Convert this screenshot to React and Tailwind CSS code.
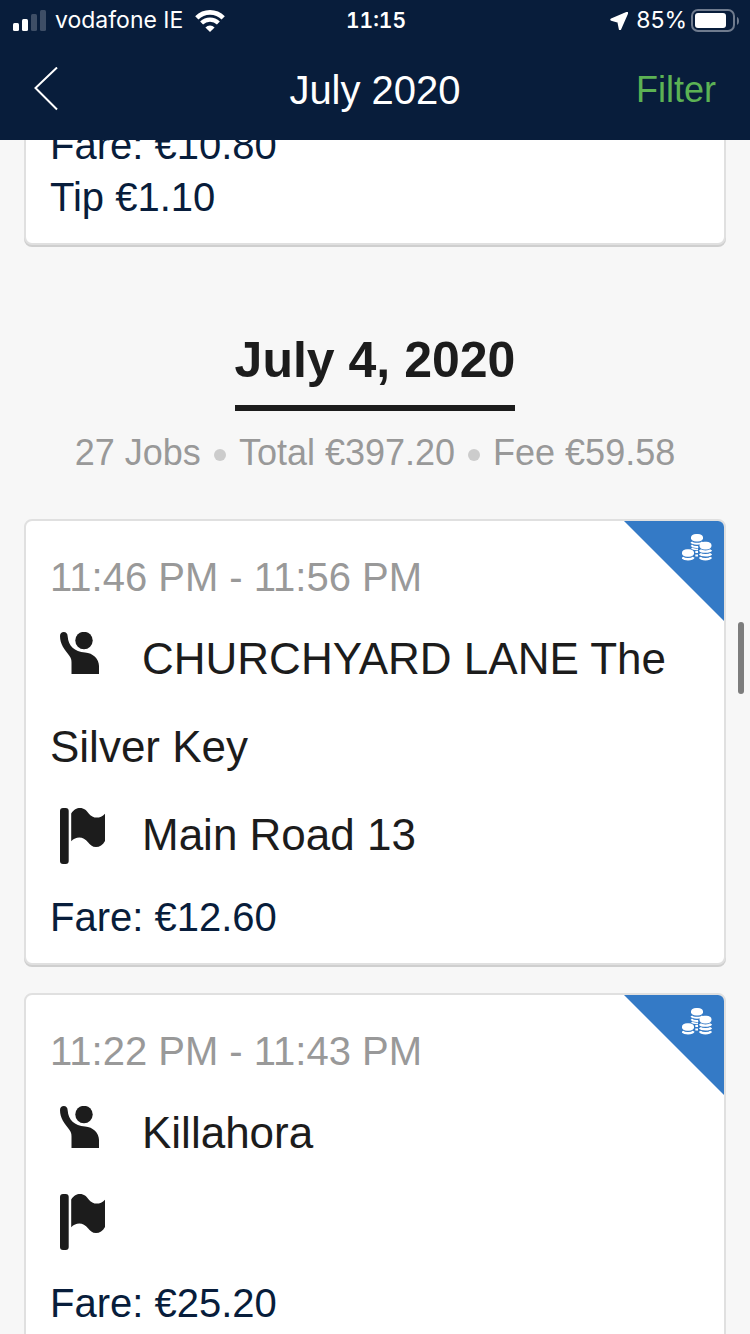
import clsx from 'clsx';

const previousTrip = { fare: '€10.80', tip: '€1.10' };

const day = {
  title: 'July 4, 2020',
  summary: ['27 Jobs', 'Total €397.20', 'Fee €59.58'],
  trips: [
    {
      time: '11:46 PM - 11:56 PM',
      pickup: 'CHURCHYARD LANE The Silver Key',
      dropoff: 'Main Road 13',
      fare: '€12.60',
    },
    {
      time: '11:22 PM - 11:43 PM',
      pickup: 'Killahora',
      dropoff: '',
      fare: '€25.20',
    },
  ],
};

function SignalIcon() {
  return (
    <svg width="34" height="22" viewBox="0 0 34 22" fill="#fff" aria-hidden="true">
      <rect x="0" y="13" width="6" height="8" rx="1.5" />
      <rect x="9" y="9" width="6" height="12" rx="1.5" />
      <rect x="18" y="4" width="6" height="17" rx="1.5" opacity="0.22" />
      <rect x="27" y="0" width="6" height="21" rx="1.5" opacity="0.22" />
    </svg>
  );
}

function WifiIcon() {
  return (
    <svg width="30" height="22" viewBox="0 0 30 22" fill="none" stroke="#fff" aria-hidden="true">
      <path d="M1.8 7.8a18.8 18.8 0 0 1 26.4 0" strokeWidth="4.6" />
      <path d="M6.6 13a12 12 0 0 1 16.8 0" strokeWidth="4.2" />
      <path d="M15 22l-4.6-4.6a6.5 6.5 0 0 1 9.200 0z" fill="#fff" stroke="none" />
    </svg>
  );
}

function LocationIcon() {
  return (
    <svg width="18" height="18" viewBox="0 0 18 18" fill="#fff" stroke="#fff" aria-hidden="true">
      <path d="M17 1 1.500 7.500 8.500 9.500 10 17z" strokeWidth="2.4" strokeLinejoin="round" />
    </svg>
  );
}

function BatteryIcon() {
  return (
    <svg width="48" height="24" viewBox="0 0 48 24" aria-hidden="true">
      <rect x="1" y="1" width="42" height="21" rx="6" fill="none" stroke="#6f7b8e" strokeWidth="2" />
      <rect x="4" y="4" width="31" height="15" rx="3" fill="#fff" />
      <path d="M46 8v8c1.3-.6 2-2.2 2-4s-.7-3.4-2-4z" fill="#6f7b8e" />
    </svg>
  );
}

function PassengerIcon() {
  return (
    <svg
      className="ml-[10px] mr-9 inline-block align-middle"
      width="46"
      height="60"
      viewBox="0 0 46 60"
      fill="#1c1c1c"
      aria-label="Pickup"
    >
      <circle cx="24" cy="8.5" r="8.7" />
      <path d="M0 4C0 1.5 1.7 0 3.8 0 6.2 0 7.600 1.600 7.700 4.500 8.200 13.500 14.500 20 25 20.500 33 21 39 27 39 34V42H11.500V30.500C11.500 27.500 11 26 9.500 24 4.500 17.500 0 12.500 0 4z" />
    </svg>
  );
}

function FlagIcon() {
  return (
    <svg
      className="ml-[10px] mr-9 inline-block align-middle"
      width="46"
      height="60"
      viewBox="0 0 46 60"
      fill="#1c1c1c"
      aria-label="Drop-off"
    >
      <rect x="0" y="0" width="8.7" height="56" rx="3" />
      <path d="M11.2 5.5C14 1.500 16.500 0 20 0c4 0 6.500 2.500 8.500 5.200 4.500 5.800 11.500 5.800 16.500.5V33c-2.300 4-5.300 6-9 6-3.700 0-6-2.200-8-4.800-4.500-5.900-11.800-6.200-16.800-1z" />
    </svg>
  );
}

function CoinsIcon({ className }) {
  return (
    <svg
      className={className}
      width="30"
      height="27"
      viewBox="0 0 30 27"
      fill="none"
      stroke="#fff"
      strokeWidth="2"
      aria-label="Cash"
    >
      <g fill="#fff" stroke="none">
        <rect x="9" y="0" width="12" height="7.6" rx="5" ry="3.4" />
        <rect x="17.5" y="7.8" width="12" height="7.6" rx="5" ry="3.4" />
        <rect x="0" y="15.2" width="12" height="7.6" rx="5" ry="3.4" />
      </g>
      <path d="M9.300 8c1.500 2.200 9.900 2.200 11.400 0M9.300 11.300c1.500 1.600 4.500 2 6.900 1.700M13.300 18h2.700M13.300 21.500h2.700" />
      <path d="M9.600 14.200c1 .9 3 1.400 6.400 1.200" strokeWidth="1.6" />
      <path d="M.4 23.200c1.500 2.800 9.700 2.800 11.200 0" strokeWidth="2.4" />
      <path d="M17.900 16c1.500 2.200 9.700 2.200 11.200 0M17.900 19.600c1.500 2.200 9.700 2.200 11.200 0M17.900 23.200c1.500 2.800 9.700 2.800 11.200 0" strokeWidth="2.4" />
    </svg>
  );
}

function StatusBar() {
  return (
    <div className="grid h-10 grid-cols-[1fr_auto_1fr] items-center pt-px pl-[13px] pr-[11px] font-['Inter',sans-serif] text-[23px]">
      <div className="flex items-center gap-2">
        <SignalIcon />
        <span>vodafone IE</span>
        <span className="pl-1">
          <WifiIcon />
        </span>
      </div>
      <span className="text-[21px] font-semibold tabular-nums">11:15</span>
      <div className="flex items-center justify-end">
        <LocationIcon />
        <span className="ml-2 mr-1">85%</span>
        <BatteryIcon />
      </div>
    </div>
  );
}

function NavBar() {
  return (
    <div className="grid h-[100px] grid-cols-[1fr_auto_1fr] items-center px-[34px]">
      <button type="button" aria-label="Back" className="justify-self-start">
        <svg width="24" height="46" viewBox="0 0 24 46" fill="none" stroke="#fff" strokeWidth="2">
          <path d="M23 .5 1.5 21 23 42.500" />
        </svg>
      </button>
      <h1 className="text-[40px]">July 2020</h1>
      <button type="button" className="justify-self-end text-4xl text-[#5cb254]">
        Filter
      </button>
    </div>
  );
}

function TripCard({ trip }) {
  return (
    <article className="relative mb-7 overflow-hidden rounded-lg border-2 border-[#e0e0e0] bg-white px-6 pt-[30px] pb-5 text-[40px] leading-[52px] shadow-[0_2px_0_#cfcfcf]">
      {trip.time && (
        <>
          <div className="absolute top-0 right-0 size-[100px] bg-[#347ac6] [clip-path:polygon(0_0,100%_0,100%_100%)]">
            <CoinsIcon className="absolute top-[13px] right-3" />
          </div>
          <p className="text-[#999]">{trip.time}</p>
          <div className="my-3 text-[44px] leading-[88px]">
            <p>
              <PassengerIcon />
              {trip.pickup}
            </p>
            <p>
              <FlagIcon />
              {trip.dropoff}
            </p>
          </div>
        </>
      )}
      <p className="text-[#081d3b]">Fare: {trip.fare}</p>
      {trip.tip && <p className="text-[#081d3b]">Tip {trip.tip}</p>}
    </article>
  );
}

function DayHeading({ title, summary }) {
  return (
    <header className="mt-[85px] mb-11 flex flex-col items-center">
      <h2 className="border-b-[6px] border-[#1c1c1c] pb-[15px] text-[50px] leading-[60px] font-bold">
        {title}
      </h2>
      <ul className="mt-5 flex text-4xl leading-[44px] text-[#999]">
        {summary.map((item, i) => (
          <li
            key={item}
            className={clsx(
              'flex items-center',
              i > 0 && 'before:mx-[13px] before:mt-1 before:size-3 before:rounded-full before:bg-[#ccc]'
            )}
          >
            {item}
          </li>
        ))}
      </ul>
    </header>
  );
}

export default function App() {
  return (
    <div className="relative flex h-screen flex-col overflow-hidden bg-[#f7f7f7] font-['Liberation_Sans',Arial,sans-serif] text-[#1c1c1c]">
      <header className="shrink-0 bg-[#081d3b] text-white">
        <StatusBar />
        <NavBar />
      </header>
      <main className="min-h-0 flex-1 overflow-hidden px-6">
        {/* list is scrolled part way through the previous day's last job */}
        <div className="-mt-[53px]">
          <TripCard trip={previousTrip} />
          <DayHeading title={day.title} summary={day.summary} />
          {day.trips.map((trip) => (
            <TripCard key={trip.time} trip={trip} />
          ))}
        </div>
      </main>
      <div className="absolute top-[622px] right-[6px] h-[72px] w-[6px] rounded-full bg-[#7d7d7d]" />
    </div>
  );
}
